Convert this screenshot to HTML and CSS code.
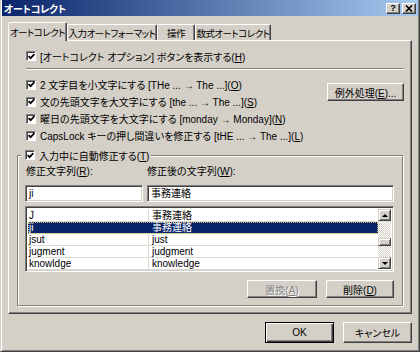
FILE: index.html
```html
<!DOCTYPE html>
<html lang="ja">
<head>
    <meta charset="UTF-8">
    <meta name="viewport" content="width=device-width, initial-scale=1.0">
    <title>オートコレクト</title>
    <link rel="stylesheet" href="styles.css">
</head>
<body>
    <div class="window">
        <!-- Title bar -->
        <div class="titlebar">
            <span class="title">オートコレクト</span>
            <span class="title-buttons">
                <span class="tb-btn">?</span>
                <span class="tb-btn">
                    <svg width="8" height="7" viewBox="0 0 8 7"><path d="M1 0.5 L7 6.5 M7 0.5 L1 6.5" stroke="#000" stroke-width="1.6" fill="none"/></svg>
                </span>
            </span>
        </div>

        <!-- Tabs -->
        <div class="tabs">
            <div class="tab active tab-autocorrect">オートコレクト</div>
            <div class="tab tab-format">入力オートフォーマット</div>
            <div class="tab tab-action">操作</div>
            <div class="tab tab-math">数式オートコレクト</div>
        </div>

        <div class="panel">
            <div class="check-row">
                <span class="cb"><svg width="7" height="7" viewBox="0 0 7 7"><path d="M0.6 3.2 L2.6 5.2 L6.4 1.2" stroke="#000" stroke-width="1.7" fill="none"/></svg></span>
                <span>[オートコレクト オプション] ボタンを表示する(<u>H</u>)</span>
            </div>
            <div class="sep"></div>

            <div class="options">
                <div class="option-list">
                    <div class="check-row">
                        <span class="cb"><svg width="7" height="7" viewBox="0 0 7 7"><path d="M0.6 3.2 L2.6 5.2 L6.4 1.2" stroke="#000" stroke-width="1.7" fill="none"/></svg></span>
                        <span>2 文字目を小文字にする [THe ... → The ...](<u>O</u>)</span>
                    </div>
                    <div class="check-row">
                        <span class="cb"><svg width="7" height="7" viewBox="0 0 7 7"><path d="M0.6 3.2 L2.6 5.2 L6.4 1.2" stroke="#000" stroke-width="1.7" fill="none"/></svg></span>
                        <span>文の先頭文字を大文字にする [the ... → The ...](<u>S</u>)</span>
                    </div>
                    <div class="check-row">
                        <span class="cb"><svg width="7" height="7" viewBox="0 0 7 7"><path d="M0.6 3.2 L2.6 5.2 L6.4 1.2" stroke="#000" stroke-width="1.7" fill="none"/></svg></span>
                        <span>曜日の先頭文字を大文字にする [monday → Monday](<u>N</u>)</span>
                    </div>
                    <div class="check-row">
                        <span class="cb"><svg width="7" height="7" viewBox="0 0 7 7"><path d="M0.6 3.2 L2.6 5.2 L6.4 1.2" stroke="#000" stroke-width="1.7" fill="none"/></svg></span>
                        <span>CapsLock キーの押し間違いを修正する [tHE ... → The ...](<u>L</u>)</span>
                    </div>
                </div>
                <button class="btn exceptions">例外処理(<u>E</u>)...</button>
            </div>

            <!-- Replace as you type -->
            <div class="group">
                <div class="group-title">
                    <span class="cb"><svg width="7" height="7" viewBox="0 0 7 7"><path d="M0.6 3.2 L2.6 5.2 L6.4 1.2" stroke="#000" stroke-width="1.7" fill="none"/></svg></span>
                    <span>入力中に自動修正する(<u>T</u>)</span>
                </div>

                <div class="field-labels">
                    <span class="label-from">修正文字列(<u>R</u>):</span>
                    <span>修正後の文字列(<u>W</u>):</span>
                </div>
                <div class="fields">
                    <div class="textbox from">ji</div>
                    <div class="textbox to">事務連絡</div>
                </div>

                <div class="list">
                    <div class="list-rows">
                        <div class="list-row"><span>J</span><span>事務連絡</span></div>
                        <div class="list-row selected"><span>ji</span><span>事務連絡</span></div>
                        <div class="list-row"><span>jsut</span><span>just</span></div>
                        <div class="list-row"><span>jugment</span><span>judgment</span></div>
                        <div class="list-row"><span>knowldge</span><span>knowledge</span></div>
                    </div>
                    <div class="scrollbar">
                        <div class="sb-btn"><span class="arrow-up"></span></div>
                        <div class="sb-track">
                            <div class="sb-thumb"></div>
                        </div>
                        <div class="sb-btn"><span class="arrow-down"></span></div>
                    </div>
                </div>

                <div class="group-buttons">
                    <button class="btn replace" disabled>置換(<u>A</u>)</button>
                    <button class="btn delete">削除(<u>D</u>)</button>
                </div>
            </div>
        </div>

        <div class="dialog-buttons">
            <button class="btn default">OK</button>
            <button class="btn">キャンセル</button>
        </div>
    </div>
</body>
</html>
```

FILE: styles.css
```css
* {
    box-sizing: border-box;
}

body {
    margin: 0;
    background-color: #d4d0c8;
    font-family: "Liberation Sans", "Noto Sans CJK JP", sans-serif;
    font-size: 10px;
    font-feature-settings: "palt";
    color: #000;
}

.window {
    width: 420px;
    height: 352px;
    padding: 0 1px 1px 1px;
    background-color: #d4d0c8;
    border-left: 1px solid #d4d0c8;
    border-right: 1px solid #404040;
    border-bottom: 1px solid #404040;
    box-shadow: inset 1px 0 #fff, inset -1px -1px #808080;
}

/* title bar */
.titlebar {
    height: 16px;
    display: flex;
    align-items: center;
    justify-content: space-between;
    padding: 0 2px 0 2px;
    background: linear-gradient(to right, #0a246a, #a6caf0);
    color: #fff;
    font-size: 10px;
    font-weight: bold;
    letter-spacing: -0.3px;
}

.title-buttons {
    display: flex;
    gap: 2px;
    letter-spacing: 0;
}

.tb-btn {
    width: 14px;
    height: 11px;
    display: flex;
    align-items: center;
    justify-content: center;
    background-color: #d4d0c8;
    border: 1px solid;
    border-color: #fff #404040 #404040 #fff;
    box-shadow: inset -1px -1px #808080;
    color: #000;
    font-size: 9px;
    line-height: 9px;
}

/* tabs */
.tabs {
    height: 18px;
    display: flex;
    align-items: flex-end;
    margin: 6px 0 0 6px;
    font-size: 9.5px;
    letter-spacing: -0.5px;
}

.tab {
    height: 16px;
    display: flex;
    align-items: center;
    justify-content: center;
    border: 1px solid;
    border-bottom: none;
    border-color: #fff #404040 #fff #fff;
    border-radius: 2px 2px 0 0;
    box-shadow: inset -1px 0 #808080;
    white-space: nowrap;
}

.tab.active {
    height: 19px;
    margin-bottom: -1px;
    background-color: #d4d0c8;
    position: relative;
}

.tab-autocorrect {
    width: 59px;
}

.tab-format {
    width: 90px;
}

.tab-action {
    width: 38px;
}

.tab-math {
    width: 76px;
}

/* tab page */
.panel {
    height: 274px;
    margin: 0 6px;
    padding: 7px 8px 0 8px;
    border: 1px solid;
    border-color: #fff #404040 #404040 #fff;
    box-shadow: inset -1px -1px #808080;
}

.check-row {
    height: 16px;
    display: flex;
    align-items: center;
    gap: 4px;
    padding-left: 9px;
    white-space: nowrap;
}

.option-list .check-row {
    height: 17px;
}

.cb {
    width: 10px;
    height: 10px;
    flex: none;
    display: flex;
    align-items: center;
    justify-content: center;
    background-color: #fff;
    border: 1px solid;
    border-color: #808080 #fff #fff #808080;
    box-shadow: inset 1px 1px #404040;
}

.sep {
    height: 2px;
    margin: 4px -1px 0 9px;
    border-top: 1px solid #808080;
    border-bottom: 1px solid #fff;
}

.options {
    display: flex;
    justify-content: space-between;
    margin-top: 6px;
}

.btn {
    height: 18px;
    padding: 0;
    background-color: #d4d0c8;
    border: 1px solid;
    border-color: #fff #404040 #404040 #fff;
    box-shadow: inset -1px -1px #808080;
    font-family: inherit;
    font-size: 10px;
    font-feature-settings: "palt";
    color: #000;
}

.btn:disabled {
    color: #808080;
    text-shadow: 1px 1px #fff;
}

.exceptions {
    width: 77px;
    margin-top: 7px;
    margin-right: -1px;
}

/* group box */
.group {
    margin-top: 11px;
    padding: 0 8px 7px 7px;
    border: 1px solid #808080;
    box-shadow: inset 1px 1px #fff, 1px 1px #fff;
}

.group-title {
    width: fit-content;
    height: 14px;
    display: flex;
    align-items: center;
    gap: 4px;
    margin: -8px 0 0 -4px;
    padding: 0 2px 0 4px;
    background-color: #d4d0c8;
}

.field-labels {
    height: 12px;
    display: flex;
    gap: 4px;
    margin-top: 4px;
    line-height: 12px;
}

.label-from {
    width: 118px;
    padding-left: 1px;
}

.fields {
    display: flex;
    gap: 4px;
    margin-top: 7px;
}

.textbox {
    height: 17px;
    padding-left: 3px;
    line-height: 15px;
    background-color: #fff;
    border: 1px solid;
    border-color: #808080 #fff #fff #808080;
    box-shadow: inset 1px 1px #404040, inset -1px -1px #d4d0c8;
}

.textbox.from {
    width: 118px;
}

.textbox.to {
    flex: 1;
}

/* replacement list */
.list {
    height: 66px;
    display: flex;
    margin-top: 4px;
    padding: 2px;
    background-color: #fff;
    border: 1px solid;
    border-color: #808080 #fff #fff #808080;
    box-shadow: inset 1px 1px #404040, inset -1px -1px #d4d0c8;
}

.list-rows {
    flex: 1;
    padding-top: 1px;
}

.list-row {
    height: 12px;
    display: grid;
    grid-template-columns: 120px 1fr;
    line-height: 11px;
    border-bottom: 1px solid #dcdad5;
}

.list-row span {
    padding-left: 1px;
    white-space: nowrap;
}

.list-row span + span {
    padding-left: 3px;
    border-left: 1px solid #dcdad5;
}

.list-row.selected {
    background-color: #0a246a;
    color: #fff;
    outline: 1px dotted #c8c070;
    outline-offset: -1px;
}

.list-row.selected span + span {
    border-left-color: #0a246a;
}

.scrollbar {
    width: 13px;
    display: flex;
    flex-direction: column;
    background: repeating-conic-gradient(#fff 0 25%, #d4d0c8 0 50%) 0 0 / 2px 2px;
}

.sb-btn {
    height: 12px;
    display: flex;
    align-items: center;
    justify-content: center;
    background-color: #d4d0c8;
    border: 1px solid;
    border-color: #d4d0c8 #404040 #404040 #d4d0c8;
    box-shadow: inset 1px 1px #fff, inset -1px -1px #808080;
}

.arrow-up {
    border-left: 3px solid transparent;
    border-right: 3px solid transparent;
    border-bottom: 3px solid #000;
}

.arrow-down {
    border-left: 3px solid transparent;
    border-right: 3px solid transparent;
    border-top: 3px solid #000;
}

.sb-track {
    flex: 1;
}

.sb-thumb {
    height: 8px;
    margin-top: 17px;
    background-color: #d4d0c8;
    border: 1px solid;
    border-color: #d4d0c8 #404040 #404040 #d4d0c8;
    box-shadow: inset 1px 1px #fff, inset -1px -1px #808080;
}

.group-buttons {
    display: flex;
    justify-content: flex-end;
    gap: 9px;
    margin-top: 8px;
}

.replace {
    width: 70px;
}

.delete {
    width: 68px;
}

/* OK / Cancel */
.dialog-buttons {
    display: flex;
    justify-content: flex-end;
    gap: 9px;
    margin-top: 8px;
    padding-right: 6px;
}

.dialog-buttons .btn {
    width: 69px;
    height: 21px;
}

.btn.default {
    border-color: #000;
    box-shadow: inset 1px 1px #fff, inset -1px -1px #404040, inset -2px -2px #808080;
}
```
